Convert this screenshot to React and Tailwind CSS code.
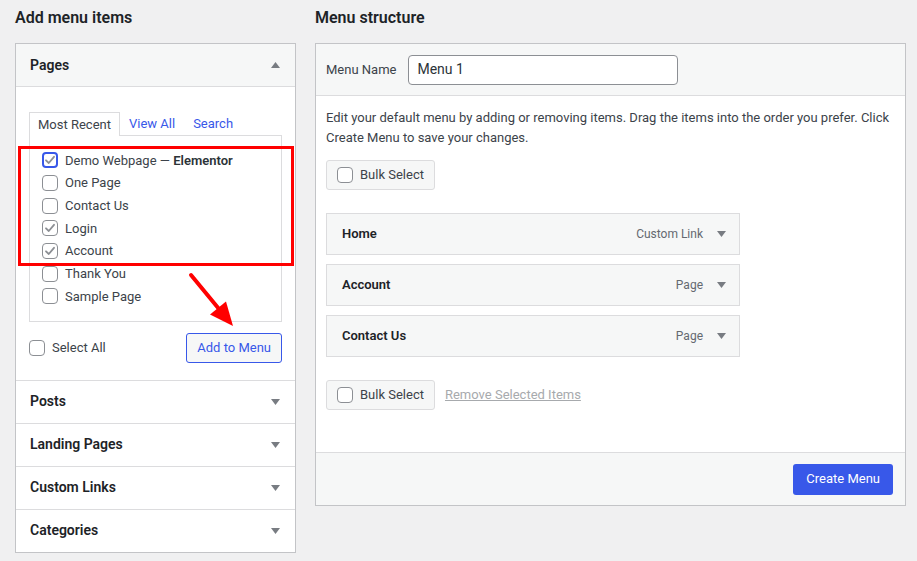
import React from "react";

function Check({ checked, focus }) {
  return (
    <span
      className={`flex h-4 w-4 shrink-0 items-center justify-center rounded-[4px] bg-white ${
        focus ? "border-2 border-[#3858e9]" : "border border-[#8c8f94]"
      }`}
    >
      {checked && (
        <svg width="12" height="12" viewBox="0 0 12 12">
          <path d="M2 6.3 L4.8 9 L10 2.8" fill="none" stroke="#8c8f94" strokeWidth="1.8" strokeLinecap="round" strokeLinejoin="round" />
        </svg>
      )}
    </span>
  );
}

function Tri({ up }) {
  return (
    <svg width="9" height="6" viewBox="0 0 9 6">
      {up ? <path d="M0 6 L4.5 0 L9 6 Z" fill="#787c82" /> : <path d="M0 0 L9 0 L4.5 6 Z" fill="#787c82" />}
    </svg>
  );
}

const pages = [
  { label: "Demo Webpage", checked: true, focus: true, extra: "Elementor" },
  { label: "One Page" },
  { label: "Contact Us" },
  { label: "Login", checked: true },
  { label: "Account", checked: true },
  { label: "Thank You" },
  { label: "Sample Page" },
];

const menuItems = [
  { name: "Home", type: "Custom Link" },
  { name: "Account", type: "Page" },
  { name: "Contact Us", type: "Page" },
];

export default function App() {
  return (
    <div
      className="relative flex h-[561px] w-[917px] gap-[19px] bg-[#f0f0f1] px-[15px] pt-[7px] text-[13px] text-[#3c434a]"
      style={{ fontFamily: "Roboto, 'Liberation Sans', sans-serif" }}
    >
      {/* left column */}
      <div className="relative w-[281px] shrink-0">
        <h2 className="mb-[14px] h-[22px] text-[16px] font-semibold leading-[22px] text-[#1d2327]">Add menu items</h2>
        <div className="border border-[#c3c4c7] bg-white">
          <div className="flex h-[43px] items-center justify-between border-b border-[#dcdcde] bg-[#f6f7f7] pl-[14px] pr-[15px]">
            <span className="text-[14px] font-semibold text-[#1d2327]">Pages</span>
            <Tri up />
          </div>
          <div className="px-[13px] pt-[24px] pb-[17px]">
            <div className="flex items-end text-[13px]">
              <div className="relative z-10 -mb-px flex h-[24px] items-center border border-b-0 border-[#dcdcde] bg-white px-[8px] pt-px text-[#3c434a]">
                Most Recent
              </div>
              <span className="ml-[9px] flex h-[24px] items-center pt-px text-[#3858e9]">View All</span>
              <span className="ml-[18px] flex h-[24px] items-center pt-px text-[#3858e9]">Search</span>
            </div>
            <div className="border border-[#dcdcde] px-[12px] py-[13px]">
              {pages.map((p) => (
                <div key={p.label} className="flex h-[22.7px] items-center gap-[7px]">
                  <Check checked={p.checked} focus={p.focus} />
                  <span>
                    {p.label}
                    {p.extra && (
                      <>
                        {" — "}
                        <b className="font-semibold text-[#2c3338]">{p.extra}</b>
                      </>
                    )}
                  </span>
                </div>
              ))}
            </div>
            <div className="mt-[11px] flex items-center justify-between">
              <label className="flex items-center gap-[7px]">
                <Check />
                <span>Select All</span>
              </label>
              <button className="h-[30px] rounded-[3px] border border-[#3858e9] bg-[#f6f7f7] px-[10px] text-[13px] text-[#3858e9]">
                Add to Menu
              </button>
            </div>
          </div>
          {["Posts", "Landing Pages", "Custom Links", "Categories"].map((s) => (
            <div key={s} className="flex h-[43px] items-center justify-between border-t border-[#dcdcde] pl-[14px] pr-[15px]">
              <span className="text-[14px] font-semibold text-[#1d2327]">{s}</span>
              <Tri />
            </div>
          ))}
        </div>
        {/* annotation box */}
        <div className="pointer-events-none absolute left-[3px] top-[139px] h-[120px] w-[276px] border-[3px] border-[#f00]" />
      </div>

      {/* right column */}
      <div className="w-[591px] shrink-0">
        <h2 className="mb-[14px] h-[22px] text-[16px] font-semibold leading-[22px] text-[#1d2327]">Menu structure</h2>
        <div className="border border-[#c3c4c7] bg-white">
          <div className="flex h-[52px] items-center gap-[12px] border-b border-[#dcdcde] bg-[#f6f7f7] px-[10px]">
            <span>Menu Name</span>
            <div className="flex h-[30px] w-[270px] items-center rounded-[4px] border border-[#8c8f94] bg-white px-[8px] text-[14px] text-[#2c3338]">
              Menu 1
            </div>
          </div>
          <div className="px-[10px] pt-[12px] pb-[42px]">
            <p className="leading-[19.5px]">
              Edit your default menu by adding or removing items. Drag the items into the order you prefer. Click Create Menu to save your changes.
            </p>
            <div className="mt-[13px] flex">
              <div className="flex h-[30px] items-center gap-[7px] rounded-[3px] border border-[#dcdcde] bg-[#f6f7f7] px-[10px]">
                <Check />
                <span>Bulk Select</span>
              </div>
            </div>
            <div className="mt-[23px] flex w-[414px] flex-col gap-[9px]">
              {menuItems.map((m) => (
                <div key={m.name} className="flex h-[42px] items-center justify-between border border-[#dcdcde] bg-[#f6f7f7] pl-[15px] pr-[13px]">
                  <span className="font-semibold text-[#1d2327]">{m.name}</span>
                  <span className="flex items-center gap-[14px] text-[12px] text-[#646970]">
                    {m.type}
                    <Tri />
                  </span>
                </div>
              ))}
            </div>
            <div className="mt-[23px] flex items-center gap-[10px]">
              <div className="flex h-[30px] items-center gap-[7px] rounded-[3px] border border-[#dcdcde] bg-[#f6f7f7] px-[10px]">
                <Check />
                <span>Bulk Select</span>
              </div>
              <span className="text-[#a7aaad] underline">Remove Selected Items</span>
            </div>
          </div>
          <div className="flex h-[53px] items-center justify-end border-t border-[#dcdcde] bg-[#f6f7f7] px-[12px]">
            <button className="h-[31px] rounded-[3px] bg-[#3858e9] px-[13px] text-[13px] text-white">Create Menu</button>
          </div>
        </div>
      </div>

      {/* annotation arrow */}
      <svg className="pointer-events-none absolute left-0 top-0" width="917" height="561">
        <line x1="191" y1="275" x2="219" y2="309" stroke="#f00" strokeWidth="4" strokeLinecap="round" />
        <polygon points="233,326 210,314.5 226,301.5" fill="#f00" />
      </svg>
    </div>
  );
}
